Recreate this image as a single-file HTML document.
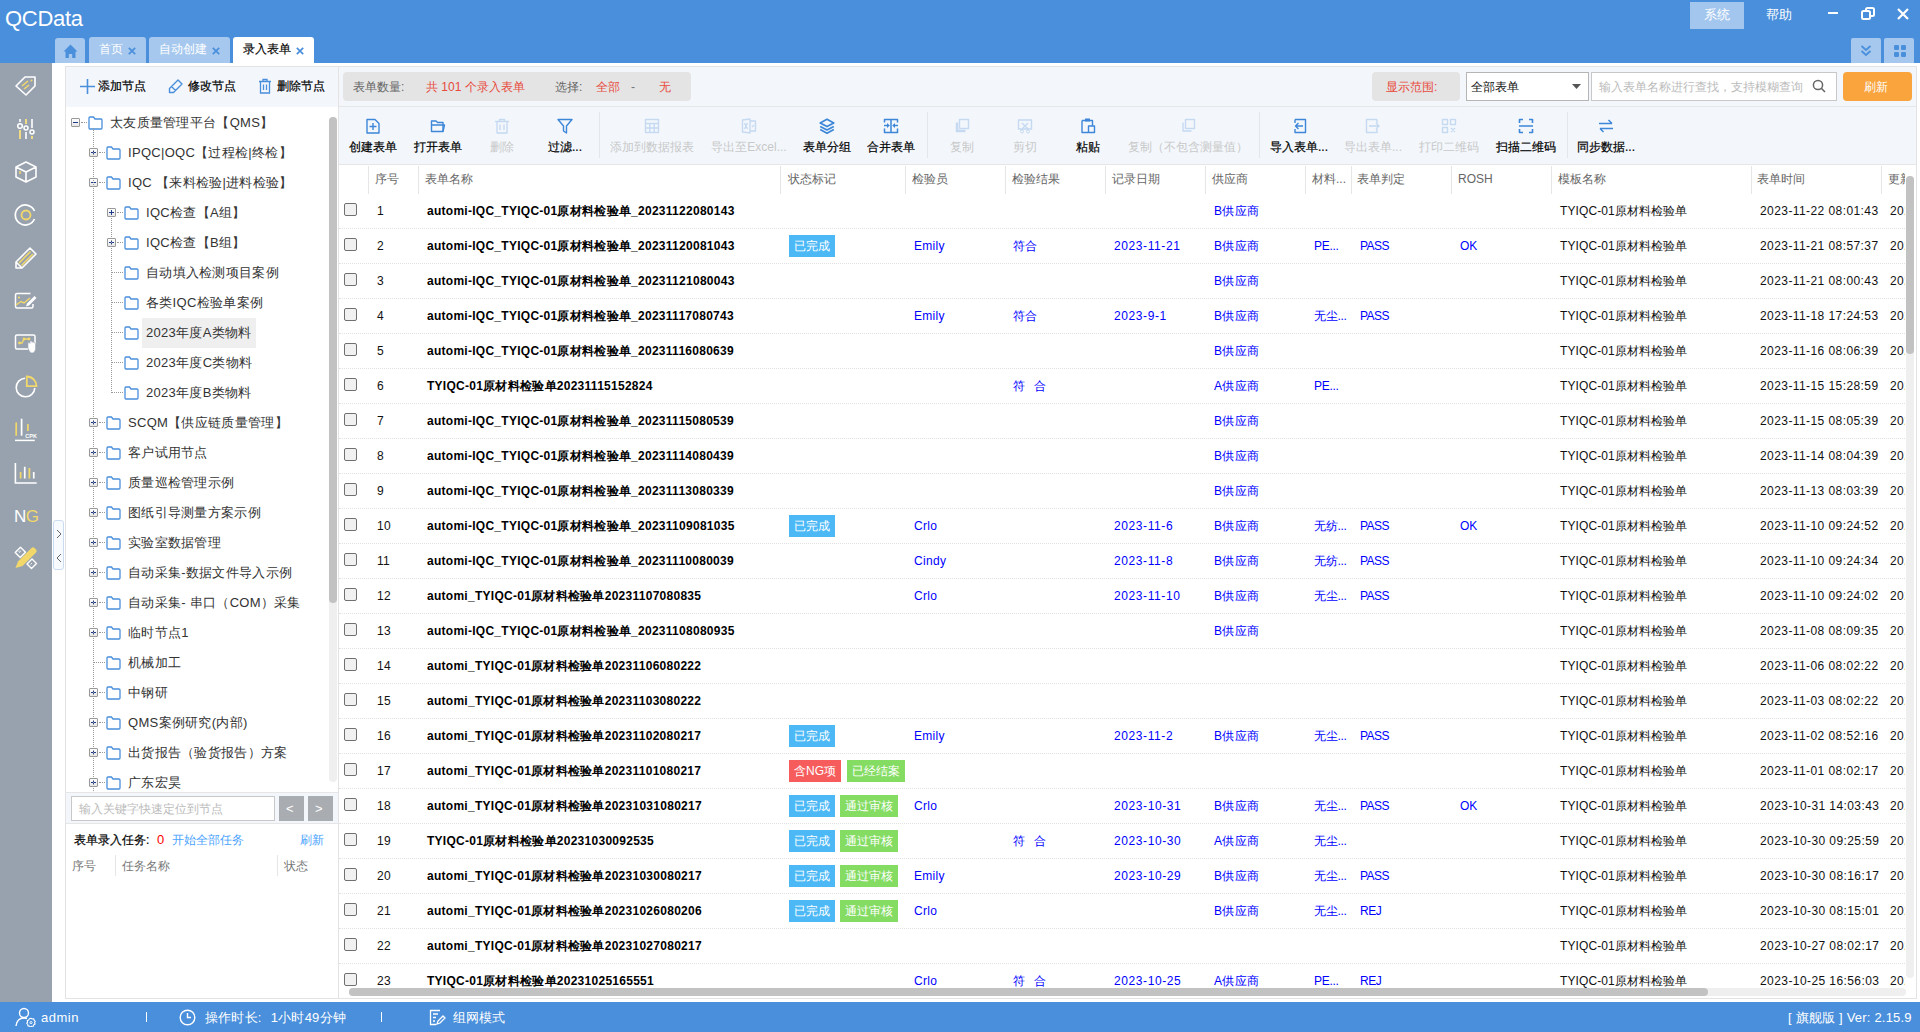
<!DOCTYPE html><html><head><meta charset="utf-8"><style>
*{margin:0;padding:0;box-sizing:border-box}
html,body{width:1920px;height:1032px;overflow:hidden;background:#fff;font-family:"Liberation Sans",sans-serif;font-size:12px;color:#333}
.a{position:absolute}
.t{position:absolute;white-space:nowrap;line-height:16px}
#hdr{left:0;top:0;width:1920px;height:63px;background:#4a8fdb}
#side{left:0;top:63px;width:52px;height:939px;background:#98a2ae}
#status{left:0;top:1002px;width:1920px;height:30px;background:#4a8fdb;color:#fff}
.tab{position:absolute;top:37px;height:26px;background:#a6c8ee;border-radius:3px 3px 0 0;color:#fff;font-size:12px}
.tab .x{color:#4a8fdb}
.pnl{position:absolute;border:1px solid #e3e3e3;background:#fff}
.lt{background:#f3f7fc}
.tb{position:absolute;top:107px;height:57px}
.tbi{position:absolute;top:11px;width:16px;height:16px;margin-left:-8px}
.tbl{position:absolute;top:32px;white-space:nowrap;font-size:12px;color:#111;transform:translateX(-50%)}
.dis{color:#c9c9c9}
.sep{position:absolute;top:112px;width:1px;height:46px;background:#e4e6ea}
.row{position:absolute;left:338px;width:1568px;height:35px;border-bottom:1px dotted #dcdcdc}
.c{position:absolute;top:10px;white-space:nowrap;line-height:16px;font-size:12px;letter-spacing:0.3px}
.blu{color:#0000ff}
.cb{position:absolute;left:5px;top:10px;width:13px;height:13px;border:1px solid #707070;border-radius:2px;background:#f1f1f1}
.tag{position:absolute;top:7px;height:22px;line-height:22px;color:#fff;font-size:12px;padding:0 5px;letter-spacing:0}
.hd{position:absolute;top:171px;white-space:nowrap;color:#666;font-size:12px;line-height:16px}
.hdv{position:absolute;top:166px;width:1px;height:28px;background:#e6e6e6}
.tr{position:absolute;height:30px;line-height:30px;white-space:nowrap;font-size:13px;color:#333;letter-spacing:0.3px}
.exp{position:absolute;width:9px;height:9px;border:1px solid #999;background:linear-gradient(#fff,#e6e6e6);border-radius:1px}
.exp:before{content:"";position:absolute;left:1px;top:3px;width:5px;height:1px;background:#1e3a8a}
.exp.p:after{content:"";position:absolute;left:3px;top:1px;width:1px;height:5px;background:#1e3a8a}
.fld{position:absolute;width:15px;height:13px}
.ico{position:absolute}
</style></head><body><div id="hdr" class="a"></div>
<div class="t" style="left:5px;top:6px;font-size:22px;line-height:26px;color:#fff;letter-spacing:-0.3px">QCData</div>
<div class="tab" style="left:55px;width:30px;top:38px;height:25px"><svg class="ico" style="left:8px;top:6px" width="15" height="15" viewBox="0 0 15 15"><path d="M7.5 0.5 L14.5 7.5 L12.5 7.5 L12.5 14 L9.2 14 L9.2 10 L5.8 10 L5.8 14 L2.5 14 L2.5 7.5 L0.5 7.5 Z" fill="#4a8fdb"/></svg></div>
<div class="tab" style="left:89px;width:57px"><span class="t" style="left:10px;top:4px;color:#fff">首页</span><svg class="ico" style="left:39px;top:10px" width="8" height="8" viewBox="0 0 8 8"><path d="M0.8 0.8 L7.2 7.2 M7.2 0.8 L0.8 7.2" stroke="#4a8fdb" stroke-width="1.7"/></svg></div>
<div class="tab" style="left:149px;width:81px"><span class="t" style="left:10px;top:4px;color:#fff">自动创建</span><svg class="ico" style="left:63px;top:10px" width="8" height="8" viewBox="0 0 8 8"><path d="M0.8 0.8 L7.2 7.2 M7.2 0.8 L0.8 7.2" stroke="#4a8fdb" stroke-width="1.7"/></svg></div>
<div class="tab" style="left:233px;width:81px;background:#fff"><span class="t" style="left:10px;top:4px;color:#000;-webkit-text-stroke:0.15px #000">录入表单</span><svg class="ico" style="left:63px;top:10px" width="8" height="8" viewBox="0 0 8 8"><path d="M0.8 0.8 L7.2 7.2 M7.2 0.8 L0.8 7.2" stroke="#4a8fdb" stroke-width="1.7"/></svg></div>
<div class="a" style="left:1690px;top:2px;width:54px;height:27px;background:#a3c6ee"></div>
<div class="t" style="left:1704px;top:7px;color:#fff;font-size:13px">系统</div>
<div class="t" style="left:1766px;top:7px;color:#fff;font-size:13px">帮助</div>
<div class="a" style="left:1828px;top:12px;width:10px;height:2px;background:#fff"></div>
<svg class="ico" style="left:1861px;top:7px" width="14" height="14" viewBox="0 0 14 14"><rect x="1" y="4" width="8" height="8" rx="1.5" fill="none" stroke="#fff" stroke-width="2"/><path d="M5 4 V2.5 Q5 1 6.5 1 H11.5 Q13 1 13 2.5 V7.5 Q13 9 11.5 9 H9" fill="none" stroke="#fff" stroke-width="2"/></svg>
<svg class="ico" style="left:1897px;top:8px" width="12" height="12" viewBox="0 0 12 12"><path d="M1 1 L11 11 M11 1 L1 11" stroke="#fff" stroke-width="2.2"/></svg>
<div class="a" style="left:1851px;top:38px;width:30px;height:25px;background:#a6c8ee;border-radius:2px 2px 0 0"></div>
<svg class="ico" style="left:1860px;top:44px" width="12" height="14" viewBox="0 0 12 14"><path d="M1.5 2 L6 6 L10.5 2 M1.5 7 L6 11 L10.5 7" fill="none" stroke="#4a8fdb" stroke-width="1.8"/></svg>
<div class="a" style="left:1884px;top:38px;width:30px;height:25px;background:#a6c8ee;border-radius:2px 2px 0 0"></div>
<svg class="ico" style="left:1893px;top:44px" width="14" height="14" viewBox="0 0 14 14"><rect x="1" y="1" width="5" height="5" rx="1.3" fill="#4a8fdb"/><rect x="8" y="1" width="5" height="5" rx="1.3" fill="#4a8fdb"/><rect x="1" y="8" width="5" height="5" rx="1.3" fill="#4a8fdb"/><rect x="8" y="8" width="5" height="5" rx="1.3" fill="#4a8fdb"/></svg>
<div id="side" class="a"></div>
<svg class="ico" style="left:14px;top:74px" width="24" height="24" viewBox="0 0 24 24"><path d="M2 12 L11 3 L21 3 L21 12 L12 21 Z" fill="none" stroke="#fff" stroke-width="1.6" stroke-linejoin="round"/><path d="M8 12 L14 7 M10 15 L15 11" stroke="#f2d86a" stroke-width="1.6"/><circle cx="17.5" cy="6.5" r="1" fill="#f2d86a"/></svg>
<svg class="ico" style="left:14px;top:117px" width="24" height="24" viewBox="0 0 24 24"><path d="M6 2 V5 M6 13 V22 M12 2 V7 M12 15 V22 M18 2 V11 M18 19 V22" stroke="#fff" stroke-width="1.6"/><path d="M6 13 V22 M12 2 V7 M18 19 V22" stroke="#f2d86a" stroke-width="1.6"/><circle cx="6" cy="9" r="2.3" fill="none" stroke="#fff" stroke-width="1.5"/><circle cx="12" cy="11" r="2" fill="none" stroke="#fff" stroke-width="1.5"/><circle cx="18" cy="15" r="2" fill="none" stroke="#fff" stroke-width="1.5"/></svg>
<svg class="ico" style="left:14px;top:160px" width="24" height="24" viewBox="0 0 24 24"><path d="M12 2 L22 7 L22 17 L12 22 L2 17 L2 7 Z M2 7 L12 12 L22 7 M12 12 V22" fill="none" stroke="#fff" stroke-width="1.6" stroke-linejoin="round"/><path d="M6 11 V14" stroke="#f2d86a" stroke-width="1.5"/></svg>
<svg class="ico" style="left:14px;top:203px" width="24" height="24" viewBox="0 0 24 24"><path d="M20.5 8 A10 10 0 1 0 20.5 16" fill="none" stroke="#fff" stroke-width="1.7"/><circle cx="12" cy="12" r="4.5" fill="none" stroke="#f2d86a" stroke-width="1.8"/></svg>
<svg class="ico" style="left:14px;top:246px" width="24" height="24" viewBox="0 0 24 24"><path d="M2 22 L2 16 L16 2 L22 8 L8 22 Z M2 16 L8 22" fill="none" stroke="#fff" stroke-width="1.6" stroke-linejoin="round"/><path d="M5 17 L16.5 5.5 M7.5 19.5 L19 8" stroke="#f2d86a" stroke-width="1.5"/></svg>
<svg class="ico" style="left:14px;top:288px" width="24" height="24" viewBox="0 0 24 24"><path d="M16.5 5.5 H3 Q1.5 5.5 1.5 7 V18.5 Q1.5 20 3 20 H17.5 Q19 20 19 18.5 V16" fill="none" stroke="#fff" stroke-width="1.5"/><path d="M13 15.5 L20.5 8 L22.5 10 L15 17.5 L12 18.5 Z" fill="#fff"/><path d="M2 17 L7 13.5 L10 15 L16 10" fill="none" stroke="#f2d86a" stroke-width="1.4"/><circle cx="5" cy="9.5" r="1.1" fill="#f2d86a"/></svg>
<svg class="ico" style="left:14px;top:331px" width="24" height="24" viewBox="0 0 24 24"><path d="M14 18 H3 Q1.5 18 1.5 16.5 V5.5 Q1.5 4 3 4 H19.5 Q21 4 21 5.5 V13" fill="none" stroke="#fff" stroke-width="1.5"/><path d="M5.5 12 H8 L10 8 H15" fill="none" stroke="#f2d86a" stroke-width="1.3"/><circle cx="5.5" cy="12" r="1.4" fill="#f2d86a"/><circle cx="10" cy="8" r="1.4" fill="#f2d86a"/><circle cx="15" cy="8" r="1.4" fill="#f2d86a"/><path d="M14 17 L14 12.5 Q14 11.5 15 11.5 Q16 11.5 16 12.5 L16 11 Q16 10 17 10 Q18 10 18 11 L18 11.5 Q18.5 10.5 19.5 11 Q20 11.3 20 12 L20.5 11.8 Q21.5 11.8 21.5 13 L21.5 18 Q21 22 18 22 Q15.5 22 14 17 Z" fill="#fff" stroke="#98a2ae" stroke-width="0.5"/></svg>
<svg class="ico" style="left:14px;top:375px" width="24" height="24" viewBox="0 0 24 24"><path d="M11 3.2 A9.3 9.3 0 1 0 20.8 13" fill="none" stroke="#fff" stroke-width="1.6"/><path d="M12.8 1.5 V11.2 H22.5 A9.7 9.7 0 0 0 12.8 1.5 Z" fill="none" stroke="#f2d86a" stroke-width="1.8" stroke-linejoin="miter"/></svg>
<svg class="ico" style="left:14px;top:418px" width="24" height="24" viewBox="0 0 24 24"><path d="M1 22.4 H20.8" stroke="#fff" stroke-width="1.5"/><path d="M2.2 4.5 V17.7 M13.9 6 V13" stroke="#f2d86a" stroke-width="1.7"/><path d="M7.6 0.7 V17.7" stroke="#fff" stroke-width="1.7"/><text x="11.3" y="20.3" font-size="5.5" fill="#fff" font-family="Liberation Sans" font-weight="bold">CPK</text></svg>
<svg class="ico" style="left:14px;top:461px" width="24" height="24" viewBox="0 0 24 24"><path d="M1.4 2 V22 H22.7" fill="none" stroke="#fff" stroke-width="1.6"/><path d="M6.6 11 V17.5 M15.4 7 V17.5" stroke="#f2d86a" stroke-width="1.7"/><path d="M10.75 5.8 V17.5 M19.75 11 V17.5" stroke="#fff" stroke-width="1.7"/></svg>
<div class="t" style="left:14px;top:506px;font-size:17px;line-height:22px;letter-spacing:-0.5px;color:#fff">N<span style="color:#f2d86a">G</span></div>
<svg class="ico" style="left:14px;top:546px" width="24" height="24" viewBox="0 0 24 24"><path d="M1.5 22 L4 15.5 L17.5 2 Q19 0.5 20.5 2 L22 3.5 Q23.5 5 22 6.5 L8.5 20 Z" fill="#f2d86a"/><path d="M1.5 22 L4 15.5 L8.5 20 Z" fill="#98a2ae" opacity="0.0"/><path d="M1.2 6.5 L6.5 1.2 L11.5 6.2 L6.2 11.5 Z" fill="none" stroke="#fff" stroke-width="1.4" stroke-linejoin="round"/><path d="M13 18 L18 13 L22.5 17.5 L17.5 22.5 Z" fill="none" stroke="#fff" stroke-width="1.4" stroke-linejoin="round"/><path d="M4.5 6 L6 4.5 M5.3 6.8 L6.8 5.3 M16.5 18.5 L18 17" stroke="#fff" stroke-width="0.9"/></svg>
<div class="a" style="left:53px;top:520px;width:11px;height:50px;border:1px solid #c9dcf2;border-radius:3px;background:#f7faff"></div>
<svg class="ico" style="left:55px;top:529px" width="8" height="34" viewBox="0 0 8 34"><path d="M2 1 L6 5 L2 9 M6 25 L2 29 L6 33" fill="none" stroke="#666" stroke-width="1"/></svg>
<div class="pnl" style="left:65px;top:66px;width:274px;height:933px"></div>
<div class="a lt" style="left:66px;top:67px;width:272px;height:40px"></div>
<svg class="ico" style="left:80px;top:79px" width="15" height="15" viewBox="0 0 15 15"><path d="M7.5 0 V15 M0 7.5 H15" stroke="#4a8fdb" stroke-width="1.6"/></svg>
<div class="t" style="left:98px;top:78px;color:#000;-webkit-text-stroke:0.2px #000">添加节点</div>
<svg class="ico" style="left:168px;top:78px" width="16" height="16" viewBox="0 0 16 16"><path d="M1.5 14.5 L1.5 10.5 L10 2 L14 6 L5.5 14.5 Z M3.5 8.5 L7.5 12.5" fill="none" stroke="#4a8fdb" stroke-width="1.4" stroke-linejoin="round"/></svg>
<div class="t" style="left:188px;top:78px;color:#000;-webkit-text-stroke:0.2px #000">修改节点</div>
<svg class="ico" style="left:258px;top:78px" width="14" height="16" viewBox="0 0 14 16"><path d="M1 3.5 H13 M5 3.5 V1.5 H9 V3.5 M2.5 3.5 V15 H11.5 V3.5 M5.5 6.5 V12 M8.5 6.5 V12" fill="none" stroke="#4a8fdb" stroke-width="1.3"/></svg>
<div class="t" style="left:277px;top:78px;color:#000;-webkit-text-stroke:0.2px #000">删除节点</div>
<div class="a" style="left:66px;top:107px;width:272px;height:685px;overflow:hidden">
<div class="exp " style="left:5px;top:11px"></div>
<div class="a" style="left:15px;top:15px;width:6px;border-top:1px dotted #999"></div>
<svg class="ico" style="left:22px;top:9px" width="15" height="14" viewBox="0 0 15 14"><path d="M1 2 Q1 1 2 1 H5.5 L7 3 H13 Q14 3 14 4 V12 Q14 13 13 13 H2 Q1 13 1 12 Z" fill="none" stroke="#4a8fdb" stroke-width="1.3"/></svg>
<div class="tr" style="left:44px;top:1px;">太友质量管理平台【QMS】</div>
<div class="exp p" style="left:23px;top:41px"></div>
<div class="a" style="left:33px;top:45px;width:6px;border-top:1px dotted #999"></div>
<svg class="ico" style="left:40px;top:39px" width="15" height="14" viewBox="0 0 15 14"><path d="M1 2 Q1 1 2 1 H5.5 L7 3 H13 Q14 3 14 4 V12 Q14 13 13 13 H2 Q1 13 1 12 Z" fill="none" stroke="#4a8fdb" stroke-width="1.3"/></svg>
<div class="tr" style="left:62px;top:31px;">IPQC|OQC【过程检|终检】</div>
<div class="exp " style="left:23px;top:71px"></div>
<div class="a" style="left:33px;top:75px;width:6px;border-top:1px dotted #999"></div>
<svg class="ico" style="left:40px;top:69px" width="15" height="14" viewBox="0 0 15 14"><path d="M1 2 Q1 1 2 1 H5.5 L7 3 H13 Q14 3 14 4 V12 Q14 13 13 13 H2 Q1 13 1 12 Z" fill="none" stroke="#4a8fdb" stroke-width="1.3"/></svg>
<div class="tr" style="left:62px;top:61px;">IQC 【来料检验|进料检验】</div>
<div class="exp p" style="left:41px;top:101px"></div>
<div class="a" style="left:51px;top:105px;width:6px;border-top:1px dotted #999"></div>
<svg class="ico" style="left:58px;top:99px" width="15" height="14" viewBox="0 0 15 14"><path d="M1 2 Q1 1 2 1 H5.5 L7 3 H13 Q14 3 14 4 V12 Q14 13 13 13 H2 Q1 13 1 12 Z" fill="none" stroke="#4a8fdb" stroke-width="1.3"/></svg>
<div class="tr" style="left:80px;top:91px;">IQC检查【A组】</div>
<div class="exp p" style="left:41px;top:131px"></div>
<div class="a" style="left:51px;top:135px;width:6px;border-top:1px dotted #999"></div>
<svg class="ico" style="left:58px;top:129px" width="15" height="14" viewBox="0 0 15 14"><path d="M1 2 Q1 1 2 1 H5.5 L7 3 H13 Q14 3 14 4 V12 Q14 13 13 13 H2 Q1 13 1 12 Z" fill="none" stroke="#4a8fdb" stroke-width="1.3"/></svg>
<div class="tr" style="left:80px;top:121px;">IQC检查【B组】</div>
<div class="a" style="left:45px;top:165px;width:12px;border-top:1px dotted #999"></div>
<svg class="ico" style="left:58px;top:159px" width="15" height="14" viewBox="0 0 15 14"><path d="M1 2 Q1 1 2 1 H5.5 L7 3 H13 Q14 3 14 4 V12 Q14 13 13 13 H2 Q1 13 1 12 Z" fill="none" stroke="#4a8fdb" stroke-width="1.3"/></svg>
<div class="tr" style="left:80px;top:151px;">自动填入检测项目案例</div>
<div class="a" style="left:45px;top:195px;width:12px;border-top:1px dotted #999"></div>
<svg class="ico" style="left:58px;top:189px" width="15" height="14" viewBox="0 0 15 14"><path d="M1 2 Q1 1 2 1 H5.5 L7 3 H13 Q14 3 14 4 V12 Q14 13 13 13 H2 Q1 13 1 12 Z" fill="none" stroke="#4a8fdb" stroke-width="1.3"/></svg>
<div class="tr" style="left:80px;top:181px;">各类IQC检验单案例</div>
<div class="a" style="left:45px;top:225px;width:12px;border-top:1px dotted #999"></div>
<svg class="ico" style="left:58px;top:219px" width="15" height="14" viewBox="0 0 15 14"><path d="M1 2 Q1 1 2 1 H5.5 L7 3 H13 Q14 3 14 4 V12 Q14 13 13 13 H2 Q1 13 1 12 Z" fill="none" stroke="#4a8fdb" stroke-width="1.3"/></svg>
<div class="tr" style="left:80px;top:211px;background:#efefef;padding:0 4px;margin-left:-4px;">2023年度A类物料</div>
<div class="a" style="left:45px;top:255px;width:12px;border-top:1px dotted #999"></div>
<svg class="ico" style="left:58px;top:249px" width="15" height="14" viewBox="0 0 15 14"><path d="M1 2 Q1 1 2 1 H5.5 L7 3 H13 Q14 3 14 4 V12 Q14 13 13 13 H2 Q1 13 1 12 Z" fill="none" stroke="#4a8fdb" stroke-width="1.3"/></svg>
<div class="tr" style="left:80px;top:241px;">2023年度C类物料</div>
<div class="a" style="left:45px;top:285px;width:12px;border-top:1px dotted #999"></div>
<svg class="ico" style="left:58px;top:279px" width="15" height="14" viewBox="0 0 15 14"><path d="M1 2 Q1 1 2 1 H5.5 L7 3 H13 Q14 3 14 4 V12 Q14 13 13 13 H2 Q1 13 1 12 Z" fill="none" stroke="#4a8fdb" stroke-width="1.3"/></svg>
<div class="tr" style="left:80px;top:271px;">2023年度B类物料</div>
<div class="exp p" style="left:23px;top:311px"></div>
<div class="a" style="left:33px;top:315px;width:6px;border-top:1px dotted #999"></div>
<svg class="ico" style="left:40px;top:309px" width="15" height="14" viewBox="0 0 15 14"><path d="M1 2 Q1 1 2 1 H5.5 L7 3 H13 Q14 3 14 4 V12 Q14 13 13 13 H2 Q1 13 1 12 Z" fill="none" stroke="#4a8fdb" stroke-width="1.3"/></svg>
<div class="tr" style="left:62px;top:301px;">SCQM【供应链质量管理】</div>
<div class="exp p" style="left:23px;top:341px"></div>
<div class="a" style="left:33px;top:345px;width:6px;border-top:1px dotted #999"></div>
<svg class="ico" style="left:40px;top:339px" width="15" height="14" viewBox="0 0 15 14"><path d="M1 2 Q1 1 2 1 H5.5 L7 3 H13 Q14 3 14 4 V12 Q14 13 13 13 H2 Q1 13 1 12 Z" fill="none" stroke="#4a8fdb" stroke-width="1.3"/></svg>
<div class="tr" style="left:62px;top:331px;">客户试用节点</div>
<div class="exp p" style="left:23px;top:371px"></div>
<div class="a" style="left:33px;top:375px;width:6px;border-top:1px dotted #999"></div>
<svg class="ico" style="left:40px;top:369px" width="15" height="14" viewBox="0 0 15 14"><path d="M1 2 Q1 1 2 1 H5.5 L7 3 H13 Q14 3 14 4 V12 Q14 13 13 13 H2 Q1 13 1 12 Z" fill="none" stroke="#4a8fdb" stroke-width="1.3"/></svg>
<div class="tr" style="left:62px;top:361px;">质量巡检管理示例</div>
<div class="exp p" style="left:23px;top:401px"></div>
<div class="a" style="left:33px;top:405px;width:6px;border-top:1px dotted #999"></div>
<svg class="ico" style="left:40px;top:399px" width="15" height="14" viewBox="0 0 15 14"><path d="M1 2 Q1 1 2 1 H5.5 L7 3 H13 Q14 3 14 4 V12 Q14 13 13 13 H2 Q1 13 1 12 Z" fill="none" stroke="#4a8fdb" stroke-width="1.3"/></svg>
<div class="tr" style="left:62px;top:391px;">图纸引导测量方案示例</div>
<div class="exp p" style="left:23px;top:431px"></div>
<div class="a" style="left:33px;top:435px;width:6px;border-top:1px dotted #999"></div>
<svg class="ico" style="left:40px;top:429px" width="15" height="14" viewBox="0 0 15 14"><path d="M1 2 Q1 1 2 1 H5.5 L7 3 H13 Q14 3 14 4 V12 Q14 13 13 13 H2 Q1 13 1 12 Z" fill="none" stroke="#4a8fdb" stroke-width="1.3"/></svg>
<div class="tr" style="left:62px;top:421px;">实验室数据管理</div>
<div class="exp p" style="left:23px;top:461px"></div>
<div class="a" style="left:33px;top:465px;width:6px;border-top:1px dotted #999"></div>
<svg class="ico" style="left:40px;top:459px" width="15" height="14" viewBox="0 0 15 14"><path d="M1 2 Q1 1 2 1 H5.5 L7 3 H13 Q14 3 14 4 V12 Q14 13 13 13 H2 Q1 13 1 12 Z" fill="none" stroke="#4a8fdb" stroke-width="1.3"/></svg>
<div class="tr" style="left:62px;top:451px;">自动采集-数据文件导入示例</div>
<div class="exp p" style="left:23px;top:491px"></div>
<div class="a" style="left:33px;top:495px;width:6px;border-top:1px dotted #999"></div>
<svg class="ico" style="left:40px;top:489px" width="15" height="14" viewBox="0 0 15 14"><path d="M1 2 Q1 1 2 1 H5.5 L7 3 H13 Q14 3 14 4 V12 Q14 13 13 13 H2 Q1 13 1 12 Z" fill="none" stroke="#4a8fdb" stroke-width="1.3"/></svg>
<div class="tr" style="left:62px;top:481px;">自动采集- 串口（COM）采集</div>
<div class="exp p" style="left:23px;top:521px"></div>
<div class="a" style="left:33px;top:525px;width:6px;border-top:1px dotted #999"></div>
<svg class="ico" style="left:40px;top:519px" width="15" height="14" viewBox="0 0 15 14"><path d="M1 2 Q1 1 2 1 H5.5 L7 3 H13 Q14 3 14 4 V12 Q14 13 13 13 H2 Q1 13 1 12 Z" fill="none" stroke="#4a8fdb" stroke-width="1.3"/></svg>
<div class="tr" style="left:62px;top:511px;">临时节点1</div>
<div class="a" style="left:27px;top:555px;width:12px;border-top:1px dotted #999"></div>
<svg class="ico" style="left:40px;top:549px" width="15" height="14" viewBox="0 0 15 14"><path d="M1 2 Q1 1 2 1 H5.5 L7 3 H13 Q14 3 14 4 V12 Q14 13 13 13 H2 Q1 13 1 12 Z" fill="none" stroke="#4a8fdb" stroke-width="1.3"/></svg>
<div class="tr" style="left:62px;top:541px;">机械加工</div>
<div class="exp p" style="left:23px;top:581px"></div>
<div class="a" style="left:33px;top:585px;width:6px;border-top:1px dotted #999"></div>
<svg class="ico" style="left:40px;top:579px" width="15" height="14" viewBox="0 0 15 14"><path d="M1 2 Q1 1 2 1 H5.5 L7 3 H13 Q14 3 14 4 V12 Q14 13 13 13 H2 Q1 13 1 12 Z" fill="none" stroke="#4a8fdb" stroke-width="1.3"/></svg>
<div class="tr" style="left:62px;top:571px;">中钢研</div>
<div class="exp p" style="left:23px;top:611px"></div>
<div class="a" style="left:33px;top:615px;width:6px;border-top:1px dotted #999"></div>
<svg class="ico" style="left:40px;top:609px" width="15" height="14" viewBox="0 0 15 14"><path d="M1 2 Q1 1 2 1 H5.5 L7 3 H13 Q14 3 14 4 V12 Q14 13 13 13 H2 Q1 13 1 12 Z" fill="none" stroke="#4a8fdb" stroke-width="1.3"/></svg>
<div class="tr" style="left:62px;top:601px;">QMS案例研究(内部)</div>
<div class="exp p" style="left:23px;top:641px"></div>
<div class="a" style="left:33px;top:645px;width:6px;border-top:1px dotted #999"></div>
<svg class="ico" style="left:40px;top:639px" width="15" height="14" viewBox="0 0 15 14"><path d="M1 2 Q1 1 2 1 H5.5 L7 3 H13 Q14 3 14 4 V12 Q14 13 13 13 H2 Q1 13 1 12 Z" fill="none" stroke="#4a8fdb" stroke-width="1.3"/></svg>
<div class="tr" style="left:62px;top:631px;">出货报告（验货报告）方案</div>
<div class="exp p" style="left:23px;top:671px"></div>
<div class="a" style="left:33px;top:675px;width:6px;border-top:1px dotted #999"></div>
<svg class="ico" style="left:40px;top:669px" width="15" height="14" viewBox="0 0 15 14"><path d="M1 2 Q1 1 2 1 H5.5 L7 3 H13 Q14 3 14 4 V12 Q14 13 13 13 H2 Q1 13 1 12 Z" fill="none" stroke="#4a8fdb" stroke-width="1.3"/></svg>
<div class="tr" style="left:62px;top:661px;">广东宏昊</div>
<div class="a" style="left:27px;top:21px;height:665px;border-left:1px dotted #999"></div>
<div class="a" style="left:45px;top:111px;height:175px;border-left:1px dotted #999"></div>
</div>
<div class="a" style="left:329px;top:117px;width:8px;height:665px;background:#efefef;border-radius:4px"></div>
<div class="a" style="left:329px;top:117px;width:8px;height:486px;background:#c2c2c2;border-radius:4px"></div>
<div class="a lt" style="left:66px;top:792px;width:272px;height:32px;border-top:1px solid #e6e6e6;border-bottom:1px solid #e6e6e6"></div>
<div class="a" style="left:71px;top:796px;width:204px;height:25px;border:1px solid #c8c8c8;background:#fff"></div>
<div class="t" style="left:79px;top:801px;color:#bbb">输入关键字快速定位到节点</div>
<div class="a" style="left:279px;top:796px;width:25px;height:25px;background:#a9acb1"></div>
<div class="t" style="left:286px;top:801px;color:#fff;font-size:13px">&lt;</div>
<div class="a" style="left:308px;top:796px;width:25px;height:25px;background:#a9acb1"></div>
<div class="t" style="left:315px;top:801px;color:#fff;font-size:13px">&gt;</div>
<div class="t" style="left:74px;top:832px;color:#000;-webkit-text-stroke:0.2px #000">表单录入任务:</div>
<div class="t" style="left:157px;top:832px;color:#f00;font-size:13px">0</div>
<div class="t" style="left:172px;top:832px;color:#4aa3ff">开始全部任务</div>
<div class="t" style="left:300px;top:832px;color:#4aa3ff">刷新</div>
<div class="t" style="left:72px;top:858px;color:#777">序号</div>
<div class="a" style="left:115px;top:855px;width:1px;height:21px;background:#e6e6e6"></div>
<div class="t" style="left:122px;top:858px;color:#777">任务名称</div>
<div class="a" style="left:277px;top:855px;width:1px;height:21px;background:#e6e6e6"></div>
<div class="t" style="left:284px;top:858px;color:#777">状态</div>
<div class="pnl" style="left:338px;top:66px;width:1579px;height:933px"></div>
<div class="a lt" style="left:339px;top:67px;width:1577px;height:40px;border-bottom:1px solid #e6e6e6"></div>
<div class="a" style="left:343px;top:72px;width:348px;height:29px;background:#e4e4e4;border-radius:4px"></div>
<div class="t" style="left:353px;top:79px;color:#666">表单数量:</div>
<div class="t" style="left:426px;top:79px;color:#e84a3c">共 101 个录入表单</div>
<div class="t" style="left:555px;top:79px;color:#666">选择:</div>
<div class="t" style="left:596px;top:79px;color:#e84a3c">全部</div>
<div class="t" style="left:631px;top:79px;color:#777">-</div>
<div class="t" style="left:659px;top:79px;color:#e84a3c">无</div>
<div class="a" style="left:1372px;top:72px;width:88px;height:29px;background:#e4e4e4;border-radius:4px"></div>
<div class="t" style="left:1386px;top:79px;color:#e84a3c">显示范围:</div>
<div class="a" style="left:1466px;top:72px;width:123px;height:29px;border:1px solid #b5b5b5;background:#fff"></div>
<div class="t" style="left:1471px;top:79px;color:#111">全部表单</div>
<svg class="ico" style="left:1572px;top:84px" width="9" height="5" viewBox="0 0 9 5"><path d="M0 0 H9 L4.5 5 Z" fill="#555"/></svg>
<div class="a" style="left:1591px;top:72px;width:246px;height:29px;border:1px solid #c8c8c8;background:#fff"></div>
<div class="t" style="left:1599px;top:79px;color:#bbb">输入表单名称进行查找，支持模糊查询</div>
<svg class="ico" style="left:1812px;top:79px" width="14" height="14" viewBox="0 0 14 14"><circle cx="6" cy="6" r="4.6" fill="none" stroke="#666" stroke-width="1.5"/><path d="M9.3 9.3 L13 13" stroke="#666" stroke-width="1.6"/></svg>
<div class="a" style="left:1843px;top:72px;width:69px;height:29px;background:#f9a43c;border-radius:4px"></div>
<div class="t" style="left:1864px;top:79px;color:#fff">刷新</div>
<div class="a lt" style="left:339px;top:107px;width:1577px;height:58px;border-bottom:1px solid #e6e6e6"></div>
<svg class="ico" style="left:365px;top:118px" width="16" height="16" viewBox="0 0 16 16"><path d="M2 1.5 H10 L14 5.5 V15 H2 Z" fill="none" stroke="#3d86d8" stroke-width="1.4" stroke-linejoin="round"/><path d="M8 5 V12 M4.5 8.5 H11.5" fill="none" stroke="#3d86d8" stroke-width="1.4" stroke-linejoin="round"/></svg>
<div class="t" style="left:373px;top:138.5px;transform:translateX(-50%);color:#000;-webkit-text-stroke:0.2px #000">创建表单</div>
<svg class="ico" style="left:430px;top:118px" width="16" height="16" viewBox="0 0 16 16"><path d="M1.5 3 H6 L7.5 4.5 H13 V13.5 H1.5 Z" fill="none" stroke="#3d86d8" stroke-width="1.4" stroke-linejoin="round"/><path d="M1.5 7 H14.5 L13 13.5" fill="none" stroke="#3d86d8" stroke-width="1.4" stroke-linejoin="round"/></svg>
<div class="t" style="left:438px;top:138.5px;transform:translateX(-50%);color:#000;-webkit-text-stroke:0.2px #000">打开表单</div>
<svg class="ico" style="left:494px;top:118px" width="16" height="16" viewBox="0 0 16 16"><path d="M1 3.5 H15 M5.5 3.5 V1.5 H10.5 V3.5 M3 3.5 V15 H13 V3.5 M6 6.5 V12 M10 6.5 V12" fill="none" stroke="#c5d9f1" stroke-width="1.4" stroke-linejoin="round"/></svg>
<div class="t" style="left:502px;top:138.5px;transform:translateX(-50%);color:#c8c8c8">删除</div>
<svg class="ico" style="left:557px;top:118px" width="16" height="16" viewBox="0 0 16 16"><path d="M1 1.5 H15 L9.5 8 V15 L6.5 13 V8 Z" fill="none" stroke="#3d86d8" stroke-width="1.4" stroke-linejoin="round"/></svg>
<div class="t" style="left:565px;top:138.5px;transform:translateX(-50%);color:#000;-webkit-text-stroke:0.2px #000">过滤...</div>
<svg class="ico" style="left:644px;top:118px" width="16" height="16" viewBox="0 0 16 16"><path d="M1.5 1.5 H14.5 V14.5 H1.5 Z M1.5 5.5 H14.5 M1.5 10 H14.5 M5.8 5.5 V14.5 M10.2 5.5 V14.5" fill="none" stroke="#c5d9f1" stroke-width="1.4" stroke-linejoin="round"/></svg>
<div class="t" style="left:652px;top:138.5px;transform:translateX(-50%);color:#c8c8c8">添加到数据报表</div>
<svg class="ico" style="left:741px;top:118px" width="16" height="16" viewBox="0 0 16 16"><path d="M1.5 2 L9 1 V15 L1.5 14 Z M9 3 H14.5 V13 H9 M3.5 5 L6.5 11 M6.5 5 L3.5 11 M11 9 L13 7" fill="none" stroke="#c5d9f1" stroke-width="1.4" stroke-linejoin="round"/></svg>
<div class="t" style="left:749px;top:138.5px;transform:translateX(-50%);color:#c8c8c8">导出至Excel...</div>
<svg class="ico" style="left:819px;top:118px" width="16" height="16" viewBox="0 0 16 16"><path d="M8 1.2 L14.8 4.9 L8 8.6 L1.2 4.9 Z" fill="none" stroke="#3d86d8" stroke-width="1.7" stroke-linejoin="round"/><path d="M1.2 8.4 L8 12 L14.8 8.4 M1.2 11.6 L8 15.2 L14.8 11.6" fill="none" stroke="#3d86d8" stroke-width="1.7" stroke-linejoin="round"/></svg>
<div class="t" style="left:827px;top:138.5px;transform:translateX(-50%);color:#000;-webkit-text-stroke:0.2px #000">表单分组</div>
<svg class="ico" style="left:883px;top:118px" width="16" height="16" viewBox="0 0 16 16"><path d="M1.5 4.5 V1.5 H14.5 V4.5 M1.5 10.5 V14.5 H14.5 V10.5 M8 1.5 V14.5" fill="none" stroke="#3d86d8" stroke-width="1.5" stroke-linejoin="round"/><path d="M1 7.5 H4.5 M10.8 7.5 H15" fill="none" stroke="#3d86d8" stroke-width="1.5" stroke-linejoin="round"/><path d="M4 5 L6.8 7.5 L4 10 Z M12 5 L9.2 7.5 L12 10 Z" fill="#3d86d8"/></svg>
<div class="t" style="left:891px;top:138.5px;transform:translateX(-50%);color:#000;-webkit-text-stroke:0.2px #000">合并表单</div>
<svg class="ico" style="left:954px;top:118px" width="16" height="16" viewBox="0 0 16 16"><path d="M5.5 1.5 H14.5 V10.5 H5.5 Z" fill="none" stroke="#c5d9f1" stroke-width="1.4" stroke-linejoin="round"/><path d="M3 4.5 V13 H11.5" fill="none" stroke="#c5d9f1" stroke-width="2.5"/></svg>
<div class="t" style="left:962px;top:138.5px;transform:translateX(-50%);color:#c8c8c8">复制</div>
<svg class="ico" style="left:1017px;top:118px" width="16" height="16" viewBox="0 0 16 16"><path d="M1.5 2 H14.5 V11 H1.5 Z" fill="none" stroke="#c5d9f1" stroke-width="1.4" stroke-linejoin="round"/><path d="M5 5 L11 11 M11 5 L5 11" fill="none" stroke="#c5d9f1" stroke-width="1.4" stroke-linejoin="round"/><circle cx="5" cy="13.5" r="1.5" fill="none" stroke="#c5d9f1"/><circle cx="11" cy="13.5" r="1.5" fill="none" stroke="#c5d9f1"/></svg>
<div class="t" style="left:1025px;top:138.5px;transform:translateX(-50%);color:#c8c8c8">剪切</div>
<svg class="ico" style="left:1080px;top:118px" width="16" height="16" viewBox="0 0 16 16"><path d="M2 2.5 H12.5 V8 M2 2.5 V14.5 H8" fill="none" stroke="#3d86d8" stroke-width="1.4" stroke-linejoin="round"/><rect x="5" y="0.5" width="5" height="3" fill="#3d86d8"/><path d="M8.5 8 H14.5 V14.5 H8.5 Z" fill="none" stroke="#3d86d8" stroke-width="1.4" stroke-linejoin="round"/></svg>
<div class="t" style="left:1088px;top:138.5px;transform:translateX(-50%);color:#000;-webkit-text-stroke:0.2px #000">粘贴</div>
<svg class="ico" style="left:1180px;top:118px" width="16" height="16" viewBox="0 0 16 16"><path d="M5.5 1.5 H14.5 V10.5 H5.5 Z M3 4.5 V13 H11.5" fill="none" stroke="#c5d9f1" stroke-width="1.4" stroke-linejoin="round"/></svg>
<div class="t" style="left:1188px;top:138.5px;transform:translateX(-50%);color:#c8c8c8">复制（不包含测量值）</div>
<svg class="ico" style="left:1291px;top:118px" width="16" height="16" viewBox="0 0 16 16"><path d="M4 1.5 H14.5 V14.5 H4 V11 M4 5 V1.5" fill="none" stroke="#3d86d8" stroke-width="1.4" stroke-linejoin="round"/><path d="M12 8 H4.5 M7.5 5 L4.5 8 L7.5 11" fill="none" stroke="#3d86d8" stroke-width="1.4" stroke-linejoin="round"/></svg>
<div class="t" style="left:1299px;top:138.5px;transform:translateX(-50%);color:#000;-webkit-text-stroke:0.2px #000">导入表单...</div>
<svg class="ico" style="left:1365px;top:118px" width="16" height="16" viewBox="0 0 16 16"><path d="M12 1.5 H1.5 V14.5 H12 V11 M12 5 V1.5" fill="none" stroke="#c5d9f1" stroke-width="1.4" stroke-linejoin="round"/><path d="M4 8 H14 M11 5 L14 8 L11 11" fill="none" stroke="#c5d9f1" stroke-width="1.4" stroke-linejoin="round"/></svg>
<div class="t" style="left:1373px;top:138.5px;transform:translateX(-50%);color:#c8c8c8">导出表单...</div>
<svg class="ico" style="left:1441px;top:118px" width="16" height="16" viewBox="0 0 16 16"><path d="M1.5 1.5 H6.5 V6.5 H1.5 Z M9.5 1.5 H14.5 V6.5 H9.5 Z M1.5 9.5 H6.5 V14.5 H1.5 Z M10 10 L14 14 M14 10 L10 14" fill="none" stroke="#c5d9f1" stroke-width="1.4" stroke-linejoin="round"/></svg>
<div class="t" style="left:1449px;top:138.5px;transform:translateX(-50%);color:#c8c8c8">打印二维码</div>
<svg class="ico" style="left:1518px;top:118px" width="16" height="16" viewBox="0 0 16 16"><path d="M1.5 5 V1.5 H5 M11 1.5 H14.5 V5 M1.5 11 V14.5 H5 M11 14.5 H14.5 V11 M1 8 H15" fill="none" stroke="#3d86d8" stroke-width="1.6" stroke-linejoin="round"/></svg>
<div class="t" style="left:1526px;top:138.5px;transform:translateX(-50%);color:#000;-webkit-text-stroke:0.2px #000">扫描二维码</div>
<svg class="ico" style="left:1598px;top:118px" width="16" height="16" viewBox="0 0 16 16"><path d="M1 5.5 H14 M10.5 2 L14 5.5 M15 10.5 H2 M5.5 14 L2 10.5" fill="none" stroke="#3d86d8" stroke-width="1.5" stroke-linejoin="round"/></svg>
<div class="t" style="left:1606px;top:138.5px;transform:translateX(-50%);color:#000;-webkit-text-stroke:0.2px #000">同步数据...</div>
<div class="sep" style="left:599px"></div>
<div class="sep" style="left:927px"></div>
<div class="sep" style="left:1259px"></div>
<div class="sep" style="left:1567px"></div>
<div class="hdv" style="left:368px"></div>
<div class="hdv" style="left:418px"></div>
<div class="hdv" style="left:780px"></div>
<div class="hdv" style="left:905px"></div>
<div class="hdv" style="left:1005px"></div>
<div class="hdv" style="left:1105px"></div>
<div class="hdv" style="left:1205px"></div>
<div class="hdv" style="left:1305px"></div>
<div class="hdv" style="left:1351px"></div>
<div class="hdv" style="left:1451px"></div>
<div class="hdv" style="left:1551px"></div>
<div class="hdv" style="left:1751px"></div>
<div class="hdv" style="left:1881px"></div>
<div class="a" style="left:339px;top:165px;width:1566px;height:829px;overflow:hidden">
<div class="hd" style="left:36px;top:6px">序号</div>
<div class="hd" style="left:86px;top:6px">表单名称</div>
<div class="hd" style="left:449px;top:6px">状态标记</div>
<div class="hd" style="left:573px;top:6px">检验员</div>
<div class="hd" style="left:673px;top:6px">检验结果</div>
<div class="hd" style="left:773px;top:6px">记录日期</div>
<div class="hd" style="left:873px;top:6px">供应商</div>
<div class="hd" style="left:973px;top:6px">材料...</div>
<div class="hd" style="left:1018px;top:6px">表单判定</div>
<div class="hd" style="left:1119px;top:6px">ROSH</div>
<div class="hd" style="left:1219px;top:6px">模板名称</div>
<div class="hd" style="left:1418px;top:6px">表单时间</div>
<div class="hd" style="left:1549px;top:6px">更新</div>
<div class="a" style="left:0;top:28px;width:1566px;height:36px;border-bottom:1px dotted #e2e2e2">
<div class="cb"></div>
<div class="c" style="left:38px;color:#111">1</div>
<div class="c" style="left:88px;color:#000;font-weight:bold;letter-spacing:0.27px">automi-IQC_TYIQC-01原材料检验单_20231122080143</div>
<div class="c blu" style="left:875px;letter-spacing:0.3px">B供应商</div>
<div class="c" style="left:1221px;color:#111;letter-spacing:0.1px">TYIQC-01原材料检验单</div>
<div class="c" style="left:1421px;color:#111;letter-spacing:0.42px">2023-11-22 08:01:43</div>
<div class="c" style="left:1551px;color:#111;letter-spacing:0.42px">2023-11</div>
</div>
<div class="a" style="left:0;top:63px;width:1566px;height:36px;border-bottom:1px dotted #e2e2e2">
<div class="cb"></div>
<div class="c" style="left:38px;color:#111">2</div>
<div class="c" style="left:88px;color:#000;font-weight:bold;letter-spacing:0.27px">automi-IQC_TYIQC-01原材料检验单_20231120081043</div>
<div class="tag" style="left:450px;background:#4cb8f5">已完成</div>
<div class="c blu" style="left:575px;letter-spacing:0.3px">Emily</div>
<div class="c blu" style="left:674px;letter-spacing:0.3px">符合</div>
<div class="c blu" style="left:775px;letter-spacing:0.6px">2023-11-21</div>
<div class="c blu" style="left:875px;letter-spacing:0.3px">B供应商</div>
<div class="c blu" style="left:975px;letter-spacing:-0.3px">PE...</div>
<div class="c blu" style="left:1021px;letter-spacing:-0.5px">PASS</div>
<div class="c blu" style="left:1121px;letter-spacing:0px">OK</div>
<div class="c" style="left:1221px;color:#111;letter-spacing:0.1px">TYIQC-01原材料检验单</div>
<div class="c" style="left:1421px;color:#111;letter-spacing:0.42px">2023-11-21 08:57:37</div>
<div class="c" style="left:1551px;color:#111;letter-spacing:0.42px">2023-11</div>
</div>
<div class="a" style="left:0;top:98px;width:1566px;height:36px;border-bottom:1px dotted #e2e2e2">
<div class="cb"></div>
<div class="c" style="left:38px;color:#111">3</div>
<div class="c" style="left:88px;color:#000;font-weight:bold;letter-spacing:0.27px">automi-IQC_TYIQC-01原材料检验单_20231121080043</div>
<div class="c blu" style="left:875px;letter-spacing:0.3px">B供应商</div>
<div class="c" style="left:1221px;color:#111;letter-spacing:0.1px">TYIQC-01原材料检验单</div>
<div class="c" style="left:1421px;color:#111;letter-spacing:0.42px">2023-11-21 08:00:43</div>
<div class="c" style="left:1551px;color:#111;letter-spacing:0.42px">2023-11</div>
</div>
<div class="a" style="left:0;top:133px;width:1566px;height:36px;border-bottom:1px dotted #e2e2e2">
<div class="cb"></div>
<div class="c" style="left:38px;color:#111">4</div>
<div class="c" style="left:88px;color:#000;font-weight:bold;letter-spacing:0.27px">automi-IQC_TYIQC-01原材料检验单_20231117080743</div>
<div class="c blu" style="left:575px;letter-spacing:0.3px">Emily</div>
<div class="c blu" style="left:674px;letter-spacing:0.3px">符合</div>
<div class="c blu" style="left:775px;letter-spacing:0.6px">2023-9-1</div>
<div class="c blu" style="left:875px;letter-spacing:0.3px">B供应商</div>
<div class="c blu" style="left:975px;letter-spacing:-0.3px">无尘...</div>
<div class="c blu" style="left:1021px;letter-spacing:-0.5px">PASS</div>
<div class="c" style="left:1221px;color:#111;letter-spacing:0.1px">TYIQC-01原材料检验单</div>
<div class="c" style="left:1421px;color:#111;letter-spacing:0.42px">2023-11-18 17:24:53</div>
<div class="c" style="left:1551px;color:#111;letter-spacing:0.42px">2023-11</div>
</div>
<div class="a" style="left:0;top:168px;width:1566px;height:36px;border-bottom:1px dotted #e2e2e2">
<div class="cb"></div>
<div class="c" style="left:38px;color:#111">5</div>
<div class="c" style="left:88px;color:#000;font-weight:bold;letter-spacing:0.27px">automi-IQC_TYIQC-01原材料检验单_20231116080639</div>
<div class="c blu" style="left:875px;letter-spacing:0.3px">B供应商</div>
<div class="c" style="left:1221px;color:#111;letter-spacing:0.1px">TYIQC-01原材料检验单</div>
<div class="c" style="left:1421px;color:#111;letter-spacing:0.42px">2023-11-16 08:06:39</div>
<div class="c" style="left:1551px;color:#111;letter-spacing:0.42px">2023-11</div>
</div>
<div class="a" style="left:0;top:203px;width:1566px;height:36px;border-bottom:1px dotted #e2e2e2">
<div class="cb"></div>
<div class="c" style="left:38px;color:#111">6</div>
<div class="c" style="left:88px;color:#000;font-weight:bold;letter-spacing:0.27px">TYIQC-01原材料检验单20231115152824</div>
<div class="c blu" style="left:674px;letter-spacing:0.3px">符<i style="display:inline-block;width:8.5px"></i>合</div>
<div class="c blu" style="left:875px;letter-spacing:0.3px">A供应商</div>
<div class="c blu" style="left:975px;letter-spacing:-0.3px">PE...</div>
<div class="c" style="left:1221px;color:#111;letter-spacing:0.1px">TYIQC-01原材料检验单</div>
<div class="c" style="left:1421px;color:#111;letter-spacing:0.42px">2023-11-15 15:28:59</div>
<div class="c" style="left:1551px;color:#111;letter-spacing:0.42px">2023-11</div>
</div>
<div class="a" style="left:0;top:238px;width:1566px;height:36px;border-bottom:1px dotted #e2e2e2">
<div class="cb"></div>
<div class="c" style="left:38px;color:#111">7</div>
<div class="c" style="left:88px;color:#000;font-weight:bold;letter-spacing:0.27px">automi-IQC_TYIQC-01原材料检验单_20231115080539</div>
<div class="c blu" style="left:875px;letter-spacing:0.3px">B供应商</div>
<div class="c" style="left:1221px;color:#111;letter-spacing:0.1px">TYIQC-01原材料检验单</div>
<div class="c" style="left:1421px;color:#111;letter-spacing:0.42px">2023-11-15 08:05:39</div>
<div class="c" style="left:1551px;color:#111;letter-spacing:0.42px">2023-11</div>
</div>
<div class="a" style="left:0;top:273px;width:1566px;height:36px;border-bottom:1px dotted #e2e2e2">
<div class="cb"></div>
<div class="c" style="left:38px;color:#111">8</div>
<div class="c" style="left:88px;color:#000;font-weight:bold;letter-spacing:0.27px">automi-IQC_TYIQC-01原材料检验单_20231114080439</div>
<div class="c blu" style="left:875px;letter-spacing:0.3px">B供应商</div>
<div class="c" style="left:1221px;color:#111;letter-spacing:0.1px">TYIQC-01原材料检验单</div>
<div class="c" style="left:1421px;color:#111;letter-spacing:0.42px">2023-11-14 08:04:39</div>
<div class="c" style="left:1551px;color:#111;letter-spacing:0.42px">2023-11</div>
</div>
<div class="a" style="left:0;top:308px;width:1566px;height:36px;border-bottom:1px dotted #e2e2e2">
<div class="cb"></div>
<div class="c" style="left:38px;color:#111">9</div>
<div class="c" style="left:88px;color:#000;font-weight:bold;letter-spacing:0.27px">automi-IQC_TYIQC-01原材料检验单_20231113080339</div>
<div class="c blu" style="left:875px;letter-spacing:0.3px">B供应商</div>
<div class="c" style="left:1221px;color:#111;letter-spacing:0.1px">TYIQC-01原材料检验单</div>
<div class="c" style="left:1421px;color:#111;letter-spacing:0.42px">2023-11-13 08:03:39</div>
<div class="c" style="left:1551px;color:#111;letter-spacing:0.42px">2023-11</div>
</div>
<div class="a" style="left:0;top:343px;width:1566px;height:36px;border-bottom:1px dotted #e2e2e2">
<div class="cb"></div>
<div class="c" style="left:38px;color:#111">10</div>
<div class="c" style="left:88px;color:#000;font-weight:bold;letter-spacing:0.27px">automi-IQC_TYIQC-01原材料检验单_20231109081035</div>
<div class="tag" style="left:450px;background:#4cb8f5">已完成</div>
<div class="c blu" style="left:575px;letter-spacing:0.3px">Crlo</div>
<div class="c blu" style="left:775px;letter-spacing:0.6px">2023-11-6</div>
<div class="c blu" style="left:875px;letter-spacing:0.3px">B供应商</div>
<div class="c blu" style="left:975px;letter-spacing:-0.3px">无纺...</div>
<div class="c blu" style="left:1021px;letter-spacing:-0.5px">PASS</div>
<div class="c blu" style="left:1121px;letter-spacing:0px">OK</div>
<div class="c" style="left:1221px;color:#111;letter-spacing:0.1px">TYIQC-01原材料检验单</div>
<div class="c" style="left:1421px;color:#111;letter-spacing:0.42px">2023-11-10 09:24:52</div>
<div class="c" style="left:1551px;color:#111;letter-spacing:0.42px">2023-11</div>
</div>
<div class="a" style="left:0;top:378px;width:1566px;height:36px;border-bottom:1px dotted #e2e2e2">
<div class="cb"></div>
<div class="c" style="left:38px;color:#111">11</div>
<div class="c" style="left:88px;color:#000;font-weight:bold;letter-spacing:0.27px">automi-IQC_TYIQC-01原材料检验单_20231110080039</div>
<div class="c blu" style="left:575px;letter-spacing:0.3px">Cindy</div>
<div class="c blu" style="left:775px;letter-spacing:0.6px">2023-11-8</div>
<div class="c blu" style="left:875px;letter-spacing:0.3px">B供应商</div>
<div class="c blu" style="left:975px;letter-spacing:-0.3px">无纺...</div>
<div class="c blu" style="left:1021px;letter-spacing:-0.5px">PASS</div>
<div class="c" style="left:1221px;color:#111;letter-spacing:0.1px">TYIQC-01原材料检验单</div>
<div class="c" style="left:1421px;color:#111;letter-spacing:0.42px">2023-11-10 09:24:34</div>
<div class="c" style="left:1551px;color:#111;letter-spacing:0.42px">2023-11</div>
</div>
<div class="a" style="left:0;top:413px;width:1566px;height:36px;border-bottom:1px dotted #e2e2e2">
<div class="cb"></div>
<div class="c" style="left:38px;color:#111">12</div>
<div class="c" style="left:88px;color:#000;font-weight:bold;letter-spacing:0.27px">automi_TYIQC-01原材料检验单20231107080835</div>
<div class="c blu" style="left:575px;letter-spacing:0.3px">Crlo</div>
<div class="c blu" style="left:775px;letter-spacing:0.6px">2023-11-10</div>
<div class="c blu" style="left:875px;letter-spacing:0.3px">B供应商</div>
<div class="c blu" style="left:975px;letter-spacing:-0.3px">无尘...</div>
<div class="c blu" style="left:1021px;letter-spacing:-0.5px">PASS</div>
<div class="c" style="left:1221px;color:#111;letter-spacing:0.1px">TYIQC-01原材料检验单</div>
<div class="c" style="left:1421px;color:#111;letter-spacing:0.42px">2023-11-10 09:24:02</div>
<div class="c" style="left:1551px;color:#111;letter-spacing:0.42px">2023-11</div>
</div>
<div class="a" style="left:0;top:448px;width:1566px;height:36px;border-bottom:1px dotted #e2e2e2">
<div class="cb"></div>
<div class="c" style="left:38px;color:#111">13</div>
<div class="c" style="left:88px;color:#000;font-weight:bold;letter-spacing:0.27px">automi-IQC_TYIQC-01原材料检验单_20231108080935</div>
<div class="c blu" style="left:875px;letter-spacing:0.3px">B供应商</div>
<div class="c" style="left:1221px;color:#111;letter-spacing:0.1px">TYIQC-01原材料检验单</div>
<div class="c" style="left:1421px;color:#111;letter-spacing:0.42px">2023-11-08 08:09:35</div>
<div class="c" style="left:1551px;color:#111;letter-spacing:0.42px">2023-11</div>
</div>
<div class="a" style="left:0;top:483px;width:1566px;height:36px;border-bottom:1px dotted #e2e2e2">
<div class="cb"></div>
<div class="c" style="left:38px;color:#111">14</div>
<div class="c" style="left:88px;color:#000;font-weight:bold;letter-spacing:0.27px">automi_TYIQC-01原材料检验单20231106080222</div>
<div class="c" style="left:1221px;color:#111;letter-spacing:0.1px">TYIQC-01原材料检验单</div>
<div class="c" style="left:1421px;color:#111;letter-spacing:0.42px">2023-11-06 08:02:22</div>
<div class="c" style="left:1551px;color:#111;letter-spacing:0.42px">2023-11</div>
</div>
<div class="a" style="left:0;top:518px;width:1566px;height:36px;border-bottom:1px dotted #e2e2e2">
<div class="cb"></div>
<div class="c" style="left:38px;color:#111">15</div>
<div class="c" style="left:88px;color:#000;font-weight:bold;letter-spacing:0.27px">automi_TYIQC-01原材料检验单20231103080222</div>
<div class="c" style="left:1221px;color:#111;letter-spacing:0.1px">TYIQC-01原材料检验单</div>
<div class="c" style="left:1421px;color:#111;letter-spacing:0.42px">2023-11-03 08:02:22</div>
<div class="c" style="left:1551px;color:#111;letter-spacing:0.42px">2023-11</div>
</div>
<div class="a" style="left:0;top:553px;width:1566px;height:36px;border-bottom:1px dotted #e2e2e2">
<div class="cb"></div>
<div class="c" style="left:38px;color:#111">16</div>
<div class="c" style="left:88px;color:#000;font-weight:bold;letter-spacing:0.27px">automi_TYIQC-01原材料检验单20231102080217</div>
<div class="tag" style="left:450px;background:#4cb8f5">已完成</div>
<div class="c blu" style="left:575px;letter-spacing:0.3px">Emily</div>
<div class="c blu" style="left:775px;letter-spacing:0.6px">2023-11-2</div>
<div class="c blu" style="left:875px;letter-spacing:0.3px">B供应商</div>
<div class="c blu" style="left:975px;letter-spacing:-0.3px">无尘...</div>
<div class="c blu" style="left:1021px;letter-spacing:-0.5px">PASS</div>
<div class="c" style="left:1221px;color:#111;letter-spacing:0.1px">TYIQC-01原材料检验单</div>
<div class="c" style="left:1421px;color:#111;letter-spacing:0.42px">2023-11-02 08:52:16</div>
<div class="c" style="left:1551px;color:#111;letter-spacing:0.42px">2023-11</div>
</div>
<div class="a" style="left:0;top:588px;width:1566px;height:36px;border-bottom:1px dotted #e2e2e2">
<div class="cb"></div>
<div class="c" style="left:38px;color:#111">17</div>
<div class="c" style="left:88px;color:#000;font-weight:bold;letter-spacing:0.27px">automi_TYIQC-01原材料检验单20231101080217</div>
<div class="tag" style="left:450px;background:#f65c5c">含NG项</div>
<div class="tag" style="left:508px;background:#84dc63">已经结案</div>
<div class="c" style="left:1221px;color:#111;letter-spacing:0.1px">TYIQC-01原材料检验单</div>
<div class="c" style="left:1421px;color:#111;letter-spacing:0.42px">2023-11-01 08:02:17</div>
<div class="c" style="left:1551px;color:#111;letter-spacing:0.42px">2023-11</div>
</div>
<div class="a" style="left:0;top:623px;width:1566px;height:36px;border-bottom:1px dotted #e2e2e2">
<div class="cb"></div>
<div class="c" style="left:38px;color:#111">18</div>
<div class="c" style="left:88px;color:#000;font-weight:bold;letter-spacing:0.27px">automi_TYIQC-01原材料检验单20231031080217</div>
<div class="tag" style="left:450px;background:#4cb8f5">已完成</div>
<div class="tag" style="left:501px;background:#84dc63">通过审核</div>
<div class="c blu" style="left:575px;letter-spacing:0.3px">Crlo</div>
<div class="c blu" style="left:775px;letter-spacing:0.6px">2023-10-31</div>
<div class="c blu" style="left:875px;letter-spacing:0.3px">B供应商</div>
<div class="c blu" style="left:975px;letter-spacing:-0.3px">无尘...</div>
<div class="c blu" style="left:1021px;letter-spacing:-0.5px">PASS</div>
<div class="c blu" style="left:1121px;letter-spacing:0px">OK</div>
<div class="c" style="left:1221px;color:#111;letter-spacing:0.1px">TYIQC-01原材料检验单</div>
<div class="c" style="left:1421px;color:#111;letter-spacing:0.42px">2023-10-31 14:03:43</div>
<div class="c" style="left:1551px;color:#111;letter-spacing:0.42px">2023-11</div>
</div>
<div class="a" style="left:0;top:658px;width:1566px;height:36px;border-bottom:1px dotted #e2e2e2">
<div class="cb"></div>
<div class="c" style="left:38px;color:#111">19</div>
<div class="c" style="left:88px;color:#000;font-weight:bold;letter-spacing:0.27px">TYIQC-01原材料检验单20231030092535</div>
<div class="tag" style="left:450px;background:#4cb8f5">已完成</div>
<div class="tag" style="left:501px;background:#84dc63">通过审核</div>
<div class="c blu" style="left:674px;letter-spacing:0.3px">符<i style="display:inline-block;width:8.5px"></i>合</div>
<div class="c blu" style="left:775px;letter-spacing:0.6px">2023-10-30</div>
<div class="c blu" style="left:875px;letter-spacing:0.3px">A供应商</div>
<div class="c blu" style="left:975px;letter-spacing:-0.3px">无尘...</div>
<div class="c" style="left:1221px;color:#111;letter-spacing:0.1px">TYIQC-01原材料检验单</div>
<div class="c" style="left:1421px;color:#111;letter-spacing:0.42px">2023-10-30 09:25:59</div>
<div class="c" style="left:1551px;color:#111;letter-spacing:0.42px">2023-11</div>
</div>
<div class="a" style="left:0;top:693px;width:1566px;height:36px;border-bottom:1px dotted #e2e2e2">
<div class="cb"></div>
<div class="c" style="left:38px;color:#111">20</div>
<div class="c" style="left:88px;color:#000;font-weight:bold;letter-spacing:0.27px">automi_TYIQC-01原材料检验单20231030080217</div>
<div class="tag" style="left:450px;background:#4cb8f5">已完成</div>
<div class="tag" style="left:501px;background:#84dc63">通过审核</div>
<div class="c blu" style="left:575px;letter-spacing:0.3px">Emily</div>
<div class="c blu" style="left:775px;letter-spacing:0.6px">2023-10-29</div>
<div class="c blu" style="left:875px;letter-spacing:0.3px">B供应商</div>
<div class="c blu" style="left:975px;letter-spacing:-0.3px">无尘...</div>
<div class="c blu" style="left:1021px;letter-spacing:-0.5px">PASS</div>
<div class="c" style="left:1221px;color:#111;letter-spacing:0.1px">TYIQC-01原材料检验单</div>
<div class="c" style="left:1421px;color:#111;letter-spacing:0.42px">2023-10-30 08:16:17</div>
<div class="c" style="left:1551px;color:#111;letter-spacing:0.42px">2023-11</div>
</div>
<div class="a" style="left:0;top:728px;width:1566px;height:36px;border-bottom:1px dotted #e2e2e2">
<div class="cb"></div>
<div class="c" style="left:38px;color:#111">21</div>
<div class="c" style="left:88px;color:#000;font-weight:bold;letter-spacing:0.27px">automi_TYIQC-01原材料检验单20231026080206</div>
<div class="tag" style="left:450px;background:#4cb8f5">已完成</div>
<div class="tag" style="left:501px;background:#84dc63">通过审核</div>
<div class="c blu" style="left:575px;letter-spacing:0.3px">Crlo</div>
<div class="c blu" style="left:875px;letter-spacing:0.3px">B供应商</div>
<div class="c blu" style="left:975px;letter-spacing:-0.3px">无尘...</div>
<div class="c blu" style="left:1021px;letter-spacing:-0.5px">REJ</div>
<div class="c" style="left:1221px;color:#111;letter-spacing:0.1px">TYIQC-01原材料检验单</div>
<div class="c" style="left:1421px;color:#111;letter-spacing:0.42px">2023-10-30 08:15:01</div>
<div class="c" style="left:1551px;color:#111;letter-spacing:0.42px">2023-11</div>
</div>
<div class="a" style="left:0;top:763px;width:1566px;height:36px;border-bottom:1px dotted #e2e2e2">
<div class="cb"></div>
<div class="c" style="left:38px;color:#111">22</div>
<div class="c" style="left:88px;color:#000;font-weight:bold;letter-spacing:0.27px">automi_TYIQC-01原材料检验单20231027080217</div>
<div class="c" style="left:1221px;color:#111;letter-spacing:0.1px">TYIQC-01原材料检验单</div>
<div class="c" style="left:1421px;color:#111;letter-spacing:0.42px">2023-10-27 08:02:17</div>
<div class="c" style="left:1551px;color:#111;letter-spacing:0.42px">2023-11</div>
</div>
<div class="a" style="left:0;top:798px;width:1566px;height:36px;border-bottom:1px dotted #e2e2e2">
<div class="cb"></div>
<div class="c" style="left:38px;color:#111">23</div>
<div class="c" style="left:88px;color:#000;font-weight:bold;letter-spacing:0.27px">TYIQC-01原材料检验单20231025165551</div>
<div class="c blu" style="left:575px;letter-spacing:0.3px">Crlo</div>
<div class="c blu" style="left:674px;letter-spacing:0.3px">符<i style="display:inline-block;width:8.5px"></i>合</div>
<div class="c blu" style="left:775px;letter-spacing:0.6px">2023-10-25</div>
<div class="c blu" style="left:875px;letter-spacing:0.3px">A供应商</div>
<div class="c blu" style="left:975px;letter-spacing:-0.3px">PE...</div>
<div class="c blu" style="left:1021px;letter-spacing:-0.5px">REJ</div>
<div class="c" style="left:1221px;color:#111;letter-spacing:0.1px">TYIQC-01原材料检验单</div>
<div class="c" style="left:1421px;color:#111;letter-spacing:0.42px">2023-10-25 16:56:03</div>
<div class="c" style="left:1551px;color:#111;letter-spacing:0.42px">2023-11</div>
</div>
</div>
<div class="a" style="left:1906px;top:176px;width:8px;height:802px;background:#efefef;border-radius:4px"></div>
<div class="a" style="left:1906px;top:176px;width:8px;height:178px;background:#c2c2c2;border-radius:4px"></div>
<div class="a" style="left:349px;top:988px;width:1557px;height:8px;background:#efefef;border-radius:4px"></div>
<div class="a" style="left:349px;top:988px;width:1359px;height:8px;background:#c2c2c2;border-radius:4px"></div>
<div id="status" class="a"></div>
<svg class="ico" style="left:15px;top:1007px" width="21" height="20" viewBox="0 0 21 20"><circle cx="9" cy="6" r="4.5" fill="none" stroke="#fff" stroke-width="1.4"/><path d="M1 19 Q2 11 9 11 Q11 11 12 11.5" fill="none" stroke="#fff" stroke-width="1.4"/><path d="M16 11.3 L17.3 12 L18.8 11.8 L19.2 13.3 L20.3 14.3 L19.6 15.6 L20.1 17 L18.8 17.8 L18.3 19.3 L16.8 19.2 L15.6 20.1 L14.5 19.1 L13 19 L12.8 17.5 L11.8 16.4 L12.6 15.1 L12.3 13.6 L13.7 13 L14.4 11.7 Z" fill="none" stroke="#fff" stroke-width="1.1" stroke-linejoin="round"/><circle cx="16" cy="15.6" r="1.1" fill="none" stroke="#fff" stroke-width="0.9"/></svg>
<div class="t" style="left:41px;top:1010px;color:#fff;font-size:13px;letter-spacing:0.5px">admin</div>
<div class="a" style="left:146px;top:1012px;width:1px;height:10px;background:#fff"></div>
<svg class="ico" style="left:179px;top:1009px" width="17" height="17" viewBox="0 0 17 17"><circle cx="8.5" cy="8.5" r="7.3" fill="none" stroke="#fff" stroke-width="1.4"/><path d="M8.5 4 V8.5 H12" fill="none" stroke="#fff" stroke-width="1.4"/></svg>
<div class="t" style="left:205px;top:1010px;color:#fff;font-size:13px;letter-spacing:0.2px">操作时长<span style="display:inline-block;width:13px">:</span>1小时49分钟</div>
<div class="a" style="left:381px;top:1012px;width:1px;height:10px;background:#fff"></div>
<svg class="ico" style="left:429px;top:1009px" width="17" height="17" viewBox="0 0 17 17"><path d="M11 1.5 H1.5 V15.5 H7 M4 5 H9 M4 8.5 H7 M4 12 H6" fill="none" stroke="#fff" stroke-width="1.3"/><path d="M8 15 L9 12 L14 7 L16 9 L11 14 Z" fill="none" stroke="#fff" stroke-width="1.3"/></svg>
<div class="t" style="left:453px;top:1010px;color:#fff;font-size:13px">组网模式</div>
<div class="t" style="left:1788px;top:1010px;color:#fff;font-size:13px;letter-spacing:0.2px">[ 旗舰版 ] Ver: 2.15.9</div></body></html>
